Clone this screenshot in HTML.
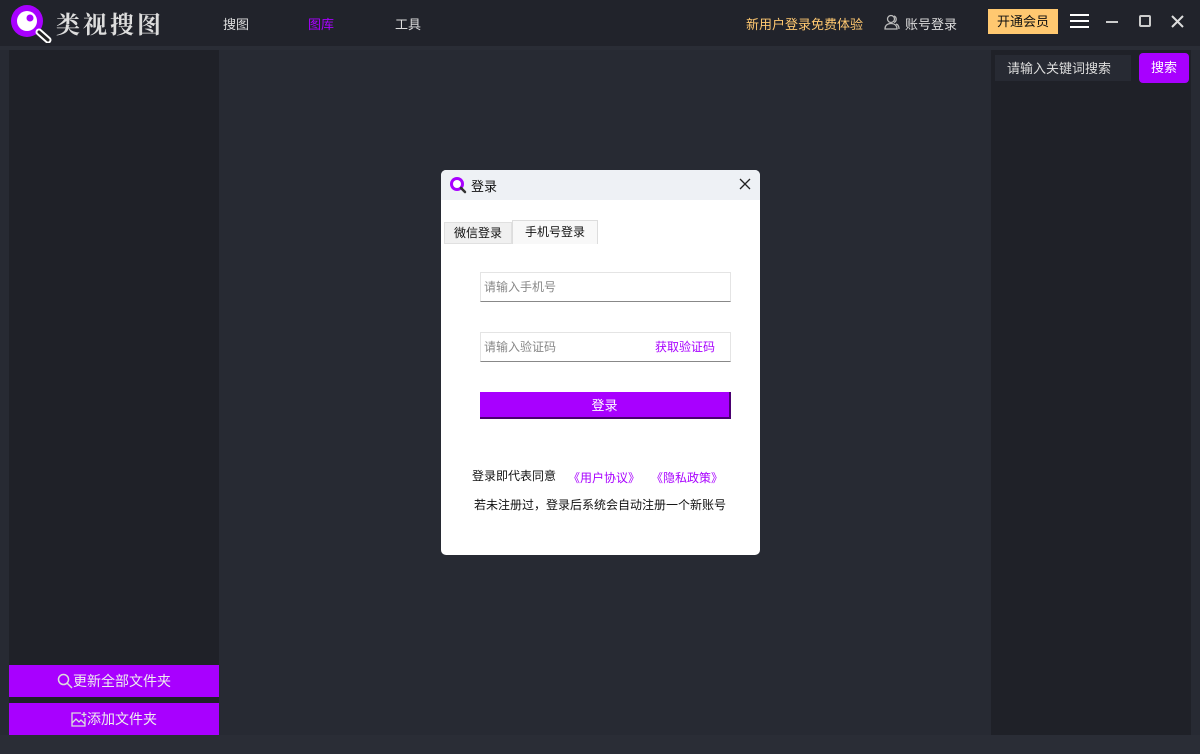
<!DOCTYPE html>
<html><head><meta charset="utf-8"><style>
*{margin:0;padding:0;box-sizing:border-box}
body{width:1200px;height:754px;background:#272a33;font-family:"Liberation Sans","Noto Sans CJK SC",sans-serif;position:relative;overflow:hidden;font-size:13px}
.a{position:absolute}
</style></head><body>
<div class="a" style="left:0;top:0;width:1200px;height:46px;background:#21232b"></div>
<div class="a" style="left:0;top:46px;width:1200px;height:4px;background:#2a2d36"></div>
<svg class="a" style="left:8px;top:3px" width="44" height="40" viewBox="0 0 44 40"><circle cx="19" cy="18" r="16" fill="#a800ff"/><circle cx="19" cy="18" r="10" fill="#fff"/><circle cx="22" cy="15" r="3.5" fill="#a800ff"/><line x1="31" y1="29" x2="40" y2="37" stroke="#fff" stroke-width="7" stroke-linecap="round"/><line x1="31" y1="29" x2="40" y2="37" stroke="#222" stroke-width="3" stroke-linecap="round"/></svg>
<div class="a" style="left:56px;top:5px;font-family:'Noto Serif CJK SC',serif;font-size:24px;color:#ddd;letter-spacing:3px;font-weight:bold">类视搜图</div>
<div class="a" style="left:223px;top:14px;color:#ddd;font-size:13px">搜图</div>
<div class="a" style="left:308px;top:14px;color:#a800ff;font-size:13px">图库</div>
<div class="a" style="left:395px;top:14px;color:#ddd;font-size:13px">工具</div>
<div class="a" style="left:746px;top:14px;color:#ffc870;font-size:13px">新用户登录免费体验</div>
<svg class="a" style="left:884px;top:14px" width="16" height="16" viewBox="0 0 16 16" fill="none" stroke="#bbb" stroke-width="1.3"><circle cx="7" cy="5" r="3.5"/><path d="M1 15c0-4 3-5.5 6-5.5s6 1.5 6 5.5zM10 2a3.5 3.5 0 0 1 0 6.5M12 10c2 .5 3 2 3 5"/></svg>
<div class="a" style="left:905px;top:14px;color:#ddd;font-size:13px">账号登录</div>
<div class="a" style="left:988px;top:9px;width:70px;height:25px;background:#ffc870;color:#111;text-align:center;line-height:25px;font-size:13px">开通会员</div>
<div class="a" style="left:1070px;top:14px;width:19px;height:2px;background:#fff;box-shadow:0 6px 0 #fff,0 12px 0 #fff"></div>
<div class="a" style="left:1106px;top:21px;width:12px;height:2px;background:#ccc"></div>
<div class="a" style="left:1139px;top:15px;width:12px;height:12px;border:2px solid #ccc;border-radius:2px"></div>
<svg class="a" style="left:1171px;top:15px" width="13" height="13" viewBox="0 0 13 13" stroke="#ddd" stroke-width="2"><path d="M1 1L12 12M12 1L1 12"/></svg>
<div class="a" style="left:9px;top:50px;width:210px;height:685px;background:#1f2128"></div>
<div class="a" style="left:991px;top:50px;width:200px;height:685px;background:#1f2128"></div>
<div class="a" style="left:0;top:735px;width:1200px;height:19px;background:#2a2d36"></div>
<div class="a" style="left:995px;top:55px;width:136px;height:26px;background:#272a33;color:#ddd;line-height:28px;padding-left:12px;font-size:13px">请输入关键词搜索</div>
<div class="a" style="left:1139px;top:53px;width:50px;height:30px;background:#a800ff;border-radius:4px;color:#fff;text-align:center;line-height:30px;font-size:13px">搜索</div>
<div class="a" style="left:9px;top:665px;width:210px;height:32px;background:#a800ff;color:#eee;text-align:center;line-height:32px;font-size:14px"><svg width="16" height="16" viewBox="0 0 16 16" style="vertical-align:-3px" fill="none" stroke="#ddd" stroke-width="1.5"><circle cx="6.5" cy="6.5" r="5"/><path d="M10 10l5 5"/></svg>更新全部文件夹</div>
<div class="a" style="left:9px;top:703px;width:210px;height:32px;background:#a800ff;color:#eee;text-align:center;line-height:32px;font-size:14px"><svg width="16" height="16" viewBox="0 0 16 16" style="vertical-align:-3px" fill="none" stroke="#ddd" stroke-width="1.3"><path d="M10 2H1v13h13V7"/><path d="M1 12l4-4 3 3 2-2 4 4"/><path d="M13 1v5M10.5 3.5h5"/></svg>添加文件夹</div>
<div class="a" style="left:441px;top:170px;width:319px;height:385px;background:#fff;border-radius:5px;overflow:hidden">
<div class="a" style="left:0;top:0;width:319px;height:30px;background:#eef1f5"></div>
<svg class="a" style="left:8px;top:6px" width="18" height="18" viewBox="0 0 18 18"><circle cx="8" cy="8" r="7" fill="#a800ff"/><circle cx="8" cy="8" r="4" fill="#fff"/><line x1="12" y1="12" x2="16" y2="16" stroke="#333" stroke-width="2.5" stroke-linecap="round"/></svg>
<div class="a" style="left:30px;top:6px;font-size:13px;color:#111">登录</div>
<svg class="a" style="left:298px;top:8px" width="12" height="12" viewBox="0 0 12 12" stroke="#222" stroke-width="1.3"><path d="M1 1L11 11M11 1L1 11"/></svg>
<div class="a" style="left:3px;top:52px;width:68px;height:22px;background:#f0f0f0;border:1px solid #e0e0e0;font-size:12px;text-align:center;line-height:21px;color:#111">微信登录</div>
<div class="a" style="left:71px;top:50px;width:86px;height:24px;background:#f8f8f8;border:1px solid #ddd;border-bottom:none;font-size:12px;text-align:center;line-height:22px;color:#111">手机号登录</div>
<div class="a" style="left:39px;top:102px;width:251px;height:30px;border:1px solid #e4e4e4;border-bottom:1px solid #888;font-size:12px;color:#888;line-height:29px;padding-left:3px">请输入手机号</div>
<div class="a" style="left:39px;top:162px;width:251px;height:30px;border:1px solid #e4e4e4;border-bottom:1px solid #888;font-size:12px;color:#888;line-height:29px;padding-left:3px">请输入验证码<span style="position:absolute;left:174px;color:#a800ff">获取验证码</span></div>
<div class="a" style="left:39px;top:222px;width:251px;height:27px;background:#a800ff;border-right:2px solid #4a0070;border-bottom:2px solid #4a0070;color:#fff;font-size:13px;text-align:center;line-height:27px">登录</div>
<div class="a" style="left:31px;top:297px;font-size:12px;color:#111">登录即代表同意</div>
<div class="a" style="left:127px;top:299px;font-size:12px;color:#a800ff">《用户协议》</div>
<div class="a" style="left:210px;top:299px;font-size:12px;color:#a800ff">《隐私政策》</div>
<div class="a" style="left:33px;top:326px;font-size:12px;color:#111">若未注册过，登录后系统会自动注册一个新账号</div>
</div>
</body></html>
